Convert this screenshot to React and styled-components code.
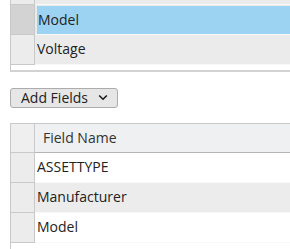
import React from "react";
import styled, { createGlobalStyle } from "styled-components";

const GlobalStyle = createGlobalStyle`
  body {
    margin: 0;
    background: #ffffff;
    font-family: "Open Sans", "Noto Sans", sans-serif;
    color: #222222;
  }
`;

const topRows = [
  { id: "prev", label: "" },
  { id: "model", label: "Model", selected: true },
  { id: "voltage", label: "Voltage" },
];

const fieldRows = ["ASSETTYPE", "Manufacturer", "Model"];

const App = () => {
  return (
    <>
      <GlobalStyle />
      <Page>
        <TopGrid>
          <ScrolledList>
            {topRows.map((row) => (
              <GridRow key={row.id} $shade="#ebebeb">
                <Indicator $selected={row.selected} />
                <DataCell $selected={row.selected}>{row.label}</DataCell>
              </GridRow>
            ))}
          </ScrolledList>
        </TopGrid>

        <AddButton type="button">
          Add Fields
          <svg width="10" height="7" viewBox="0 0 10 7">
            <path
              d="M1.2 1.5 L5 5.2 L8.8 1.5"
              fill="none"
              stroke="#1a1a1a"
              strokeWidth="1.6"
            />
          </svg>
        </AddButton>

        <FieldGrid>
          <HeaderRow>
            <Indicator $header />
            <HeaderCell>Field Name</HeaderCell>
          </HeaderRow>
          {fieldRows.map((name, i) => (
            <GridRow key={name} $shade={i % 2 === 1 ? "#ececec" : "#ffffff"}>
              <Indicator />
              <DataCell>{name}</DataCell>
            </GridRow>
          ))}
        </FieldGrid>
      </Page>
    </>
  );
};

export default App;

const Page = styled.div`
  width: 290px;
  height: 249px;
  overflow: hidden;
`;

const TopGrid = styled.div`
  margin-left: 10px;
  height: 70px;
  border-left: 1px solid #c9c9c9;
  border-bottom: 2px solid #d2d2d2;
  overflow: hidden;
`;

const ScrolledList = styled.div`
  margin-top: -25px;
`;

const GridRow = styled.div`
  display: grid;
  grid-template-columns: 24px 1fr;
  height: 30px;
  background: ${(p) => p.$shade};
  border-bottom: 1px solid #f7f7f7;
  box-sizing: border-box;
`;

const Indicator = styled.div`
  background: ${(p) =>
    p.$selected ? "#d3d3d3" : p.$header ? "#efefef" : "#ececec"};
  border-right: 1px solid #c9c9c9;
  border-bottom: 1px solid #c9c9c9;
  margin-bottom: -1px;
`;

const DataCell = styled.div`
  display: flex;
  align-items: center;
  padding-left: ${(p) => (p.$selected ? "1px" : "2px")};
  margin-left: ${(p) => (p.$selected ? "2px" : "0")};
  margin-top: ${(p) => (p.$selected ? "1px" : "0")};
  background: ${(p) => (p.$selected ? "#9dd3f2" : "transparent")};
  font-size: 14px;
  color: #222222;
  white-space: nowrap;
  padding-bottom: 2px;
`;

const AddButton = styled.button`
  display: flex;
  align-items: center;
  justify-content: space-between;
  margin: 16px 0 0 10px;
  width: 108px;
  height: 20px;
  padding: 0 9px 1px 10px;
  box-sizing: border-box;
  background: #e6e6e6;
  border: 1px solid #acacac;
  border-radius: 3px;
  font-family: "Open Sans", "Noto Sans", sans-serif;
  font-size: 14px;
  color: #222222;

  svg {
    margin-left: 8px;
  }
`;

const FieldGrid = styled.div`
  margin: 15px 0 0 10px;
  border-left: 1px solid #c9c9c9;
  border-top: 1px solid #c9c9c9;
  height: 130px;
`;

const HeaderRow = styled.div`
  display: grid;
  grid-template-columns: 24px 1fr;
  height: 28px;
  background: #eef0f2;
  border-bottom: 1px solid #b5b5b5;
`;

const HeaderCell = styled.div`
  display: flex;
  align-items: center;
  padding-left: 8px;
  font-size: 14px;
  color: #333333;
  padding-bottom: 2px;
`;
